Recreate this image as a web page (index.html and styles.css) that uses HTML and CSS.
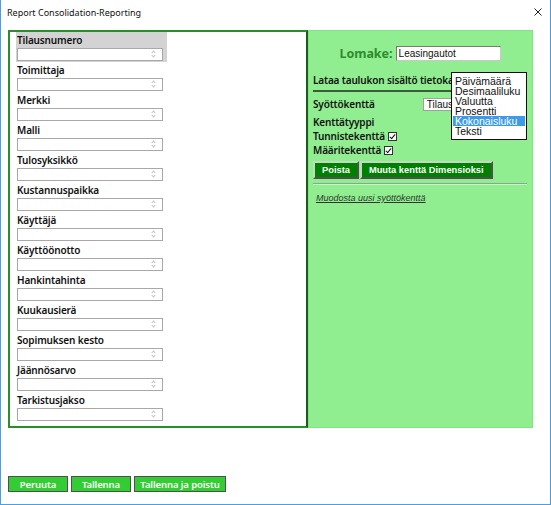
FILE: index.html
```html
<!DOCTYPE html>
<html lang="fi">
<head>
    <meta charset="UTF-8">
    <meta name="viewport" content="width=device-width, initial-scale=1.0">
    <title>Report Consolidation-Reporting</title>
    <link rel="stylesheet" href="styles.css">
</head>
<body>

    <div class="window">
        <div class="titlebar">
            <span class="title">Report Consolidation-Reporting</span>
            <svg class="close" width="8" height="8" viewBox="0 0 8 8">
                <path d="M0.5 0.5 L7.5 7.5 M7.5 0.5 L0.5 7.5" stroke="#222" stroke-width="1" fill="none"/>
            </svg>
        </div>

        <div class="content">
            <!-- Field list -->
            <div class="fields">
                <div class="field selected">
                    <div class="field-label">Tilausnumero</div>
                    <div class="field-box"><span class="spin"></span></div>
                </div>
                <div class="field">
                    <div class="field-label">Toimittaja</div>
                    <div class="field-box"><span class="spin"></span></div>
                </div>
                <div class="field">
                    <div class="field-label">Merkki</div>
                    <div class="field-box"><span class="spin"></span></div>
                </div>
                <div class="field">
                    <div class="field-label">Malli</div>
                    <div class="field-box"><span class="spin"></span></div>
                </div>
                <div class="field">
                    <div class="field-label">Tulosyksikkö</div>
                    <div class="field-box"><span class="spin"></span></div>
                </div>
                <div class="field">
                    <div class="field-label">Kustannuspaikka</div>
                    <div class="field-box"><span class="spin"></span></div>
                </div>
                <div class="field">
                    <div class="field-label">Käyttäjä</div>
                    <div class="field-box"><span class="spin"></span></div>
                </div>
                <div class="field">
                    <div class="field-label">Käyttöönotto</div>
                    <div class="field-box"><span class="spin"></span></div>
                </div>
                <div class="field">
                    <div class="field-label">Hankintahinta</div>
                    <div class="field-box"><span class="spin"></span></div>
                </div>
                <div class="field">
                    <div class="field-label">Kuukausierä</div>
                    <div class="field-box"><span class="spin"></span></div>
                </div>
                <div class="field">
                    <div class="field-label">Sopimuksen kesto</div>
                    <div class="field-box"><span class="spin"></span></div>
                </div>
                <div class="field">
                    <div class="field-label">Jäännösarvo</div>
                    <div class="field-box"><span class="spin"></span></div>
                </div>
                <div class="field">
                    <div class="field-label">Tarkistusjakso</div>
                    <div class="field-box"><span class="spin"></span></div>
                </div>
            </div>

            <!-- Field editor -->
            <div class="editor">
                <div class="form-name">
                    <span class="form-label">Lomake:</span>
                    <div class="text-input">Leasingautot</div>
                </div>

                <div class="row">Lataa taulukon sisältö tietokannasta</div>
                <div class="rule-dark"></div>

                <div class="row input-row">
                    <span>Syöttökenttä</span>
                    <div class="select-input">Tilausnumero</div>
                </div>
                <div class="row type-row">Kenttätyyppi</div>
                <div class="row">Tunnistekenttä <span class="check"></span></div>
                <div class="row">Määritekenttä <span class="check"></span></div>

                <div class="button-row">
                    <button class="dark-btn">Poista</button>
                    <button class="dark-btn">Muuta kenttä Dimensioksi</button>
                </div>
                <div class="rule-light"></div>

                <a class="new-link" href="#">Muodosta uusi syöttökenttä</a>

                <!-- open type list -->
                <ul class="type-list">
                    <li>Päivämäärä</li>
                    <li>Desimaaliluku</li>
                    <li>Valuutta</li>
                    <li>Prosentti</li>
                    <li class="active">Kokonaisluku</li>
                    <li>Teksti</li>
                </ul>
            </div>
        </div>

        <div class="actions">
            <button class="green-btn">Peruuta</button>
            <button class="green-btn">Tallenna</button>
            <button class="green-btn">Tallenna ja poistu</button>
        </div>
    </div>

</body>
</html>
```

FILE: styles.css
```css
/* General */
body {
    margin: 0;
    font-family: "Noto Sans", sans-serif;
    background-color: white;
}

.window {
    width: 551px;
    height: 505px;
    box-sizing: border-box;
    border: 1px solid #4a9fe4;
    border-top: none;
    background-color: white;
}

/* Title bar */
.titlebar {
    height: 30px;
    display: flex;
    align-items: center;
    justify-content: space-between;
    padding: 0 8px 0 6px;
    box-sizing: border-box;
}

.title {
    font-size: 9px;
    color: #111;
    margin-top: -6px;
}

.close {
    margin-top: -6px;
}

.content {
    display: flex;
    margin-left: 7px;
    height: 398px;
}

/* Field list */
.fields {
    width: 300px;
    box-sizing: border-box;
    border: 2px solid #2a8f2a;
    border-right-color: #17601a;
    padding: 0 0 0 6px;
}

.field {
    width: 151px;
    height: 30px;
    box-sizing: border-box;
    padding: 1px 0 0 1px;
}

.field.selected {
    background-color: #d3d3d3;
}

.field-label {
    font-size: 10px;
    font-weight: 600;
    letter-spacing: -0.15px;
    line-height: 14px;
    color: #111;
}

.field-box {
    position: relative;
    width: 146px;
    height: 13px;
    box-sizing: border-box;
    border: 1px solid #a8a8a8;
    background-color: white;
    margin-top: 1px;
}

/* faint up/down chevrons */
.spin::before,
.spin::after {
    content: "";
    position: absolute;
    right: 7px;
    width: 2px;
    height: 2px;
    border: solid #c4c4c4;
    transform: rotate(45deg);
}

.spin::before {
    top: 2px;
    border-width: 1px 0 0 1px;
}

.spin::after {
    top: 5px;
    border-width: 0 1px 1px 0;
}

/* Editor */
.editor {
    position: relative;
    width: 225px;
    box-sizing: border-box;
    background-color: #90ee90;
    border: 1px solid #84e184;
    padding: 14px 5px 0 4px;
    font-size: 10px;
    font-weight: 600;
    letter-spacing: -0.15px;
    color: #111;
}

.form-name {
    display: flex;
    justify-content: center;
    align-items: center;
    gap: 3px;
    height: 16px;
}

.form-label {
    color: #2e8b2e;
    font-size: 12.5px;
    font-weight: 700;
    letter-spacing: 0;
}

.text-input {
    width: 105px;
    height: 15px;
    box-sizing: border-box;
    border: 1px solid #7a7a7a;
    border-right-color: #c8c8c8;
    border-bottom-color: #c8c8c8;
    background-color: white;
    font-family: "Liberation Sans", Arial, sans-serif;
    font-size: 10px;
    font-weight: normal;
    letter-spacing: 0;
    line-height: 13px;
    padding-left: 2px;
}

.row {
    height: 14px;
    line-height: 14px;
    white-space: nowrap;
    display: flex;
    align-items: center;
}

.form-name + .row {
    margin-top: 12px;
}

.rule-dark {
    height: 2px;
    background-color: #3c5a3c;
    margin-top: 3px;
    width: 214px;
}

.input-row {
    margin-top: 5px;
}

.select-input {
    width: 100px;
    height: 13px;
    margin-left: 48px;
    box-sizing: border-box;
    border: 1px solid #a0a0a0;
    background-color: white;
    font-family: "Liberation Sans", Arial, sans-serif;
    font-size: 10px;
    font-weight: normal;
    letter-spacing: 0;
    line-height: 11px;
    padding-left: 3px;
    overflow: hidden;
}

.type-row {
    margin-top: 4px;
}

.check {
    display: inline-block;
    width: 9px;
    height: 9px;
    box-sizing: border-box;
    border: 1px solid #333;
    background: white;
    margin-left: 3px;
    position: relative;
}

.check::after {
    content: "";
    position: absolute;
    left: 2px;
    top: 0;
    width: 2px;
    height: 5px;
    border: solid #111;
    border-width: 0 1.5px 1.5px 0;
    transform: rotate(40deg);
}

.button-row {
    display: flex;
    gap: 1px;
    margin-top: 4px;
}

.dark-btn {
    height: 18px;
    padding: 0 7px;
    background-color: #008000;
    color: white;
    border: 2px solid #c4d8c4;
    border-right-color: #505050;
    border-bottom-color: #505050;
    font-family: "Liberation Sans", Arial, sans-serif;
    font-size: 9.3px;
    font-weight: bold;
}

.rule-light {
    height: 1px;
    background-color: #9a9a9a;
    border-bottom: 1px solid #c8f4c8;
    margin-top: 4px;
    width: 214px;
}

.new-link {
    display: block;
    margin: 8px 0 0 3px;
    font-family: "Liberation Sans", Arial, sans-serif;
    font-size: 9px;
    font-style: italic;
    font-weight: normal;
    letter-spacing: 0;
    color: #333;
}

/* Open drop-down */
.type-list {
    position: absolute;
    left: 142px;
    top: 41px;
    width: 76px;
    margin: 0;
    padding: 3px 1px;
    box-sizing: border-box;
    list-style: none;
    background-color: white;
    border: 1px solid #111;
    font-family: "Liberation Sans", Arial, sans-serif;
    font-size: 10.5px;
    font-weight: normal;
    letter-spacing: 0;
    line-height: 10px;
}

.type-list li {
    height: 10px;
    padding-left: 2px;
}

.type-list .active {
    background-color: #3d9be6;
    color: white;
}

/* Bottom buttons */
.actions {
    display: flex;
    gap: 3px;
    margin: 48px 0 0 7px;
}

.green-btn {
    height: 16px;
    padding: 0;
    background-color: #32cd32;
    color: white;
    border: 1px solid #505050;
    font-family: "Noto Sans", sans-serif;
    font-size: 9.5px;
    font-weight: 600;
    letter-spacing: -0.1px;
    line-height: 13px;
}

.green-btn:nth-child(1) { width: 60px; }
.green-btn:nth-child(2) { width: 60px; }
.green-btn:nth-child(3) { width: 92px; }
```
